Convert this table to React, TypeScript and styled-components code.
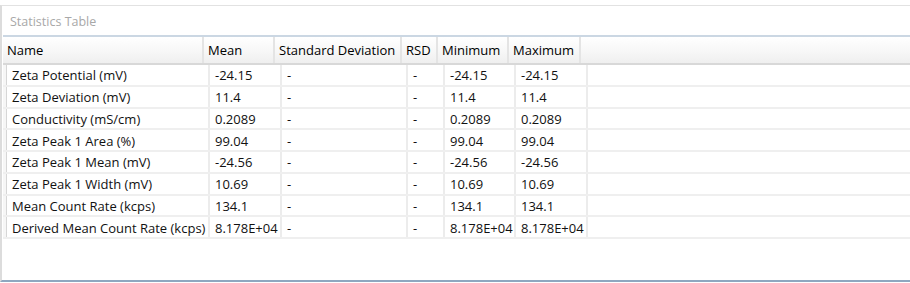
import React from 'react';
import styled, { createGlobalStyle } from 'styled-components';

const GlobalStyle = createGlobalStyle`
  html, body {
    margin: 0;
    padding: 0;
    background: #ffffff;
  }
  body {
    font-family: 'Open Sans', 'Noto Sans', 'Liberation Sans', sans-serif;
    font-size: 13px;
    color: #000000;
  }
`;

// column widths, header and body are offset a little like the original grid
const headerCols = '201px 71px 127px 36px 71px 72px 1fr';
const bodyCols = '4px 203px 72px 126px 37px 71px 72px 1fr';

const Page = styled.div`
  width: 910px;
  height: 283px;
  padding-top: 5px;
  box-sizing: border-box;
`;

const Panel = styled.div`
  height: 277px;
  box-sizing: border-box;
  border-top: 1px solid #e2e2e2;
  border-left: 2px solid #dcdcdc;
  border-bottom: 2px solid #8ea7c0;
  display: flex;
  flex-direction: column;
`;

const TitleBar = styled.div`
  height: 29px;
  box-sizing: border-box;
  padding: 1px 0 0 8px;
  display: flex;
  align-items: center;
  color: #a8a8a8;
  font-size: 12.5px;
`;

const Table = styled.div`
  flex: 1;
  border-top: 2px solid #cbd7e3;
  margin-left: 1px;
  display: flex;
  flex-direction: column;
`;

const HeaderRow = styled.div`
  display: grid;
  grid-template-columns: ${headerCols};
  height: 26px;
  background: linear-gradient(#ffffff 0%, #f7f7f7 55%, #efefef 100%);
  border-bottom: 2px solid #d8d8d8;
`;

const HeaderCell = styled.div<{ $last?: boolean }>`
  display: flex;
  align-items: center;
  padding-left: 4px;
  white-space: nowrap;
  border-right: ${(p) => (p.$last ? 'none' : '2px solid #e4e4e4')};
`;

const DataRow = styled.div`
  display: grid;
  grid-template-columns: ${bodyCols};
  height: 21.75px;
  box-sizing: border-box;
  border-bottom: 2px solid #efefef;
`;

const RowHead = styled.div`
  background: #f6f6f6;
  border-right: 1px solid #d6d6d6;
`;

const Cell = styled.div<{ $last?: boolean }>`
  display: flex;
  align-items: center;
  padding: 1px 0 0 5px;
  white-space: nowrap;
  overflow: hidden;
  color: #111111;
  border-right: ${(p) => (p.$last ? 'none' : '2px solid #ececec')};
`;

const headers = ['Name', 'Mean', 'Standard Deviation', 'RSD', 'Minimum', 'Maximum'];

const rows: [string, string][] = [
  ['Zeta Potential (mV)', '-24.15'],
  ['Zeta Deviation (mV)', '11.4'],
  ['Conductivity (mS/cm)', '0.2089'],
  ['Zeta Peak 1 Area (%)', '99.04'],
  ['Zeta Peak 1 Mean (mV)', '-24.56'],
  ['Zeta Peak 1 Width (mV)', '10.69'],
  ['Mean Count Rate (kcps)', '134.1'],
  ['Derived Mean Count Rate (kcps)', '8.178E+04'],
];

const App: React.FC = () => (
  <Page>
    <GlobalStyle />
    <Panel>
      <TitleBar>Statistics Table</TitleBar>
      <Table>
        <HeaderRow>
          {headers.map((h) => (
            <HeaderCell key={h}>{h}</HeaderCell>
          ))}
          <HeaderCell $last />
        </HeaderRow>
        {rows.map(([name, value]) => (
          <DataRow key={name}>
            <RowHead />
            <Cell>{name}</Cell>
            <Cell>{value}</Cell>
            <Cell>-</Cell>
            <Cell>-</Cell>
            <Cell>{value}</Cell>
            <Cell>{value}</Cell>
            <Cell $last />
          </DataRow>
        ))}
      </Table>
    </Panel>
  </Page>
);

export default App;
